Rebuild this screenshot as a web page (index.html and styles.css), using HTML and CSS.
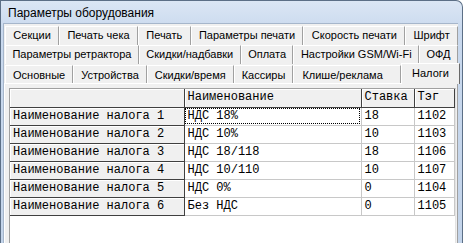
FILE: index.html
```html
<!DOCTYPE html>
<html>
<head>
<meta charset="utf-8">
<link rel="stylesheet" href="styles.css">
</head>
<body>
<div class="window">
  <div class="titlebar">Параметры оборудования</div>
  <div class="client">
    <div class="tabs">
      <div class="tabrow">
        <div class="tab">Секции</div>
        <div class="tab">Печать чека</div>
        <div class="tab">Печать</div>
        <div class="tab">Параметры печати</div>
        <div class="tab">Скорость печати</div>
        <div class="tab">Шрифт</div>
      </div>
      <div class="tabrow">
        <div class="tab">Параметры ретрактора</div>
        <div class="tab">Скидки/надбавки</div>
        <div class="tab">Оплата</div>
        <div class="tab">Настройки GSM/Wi-Fi</div>
        <div class="tab">ОФД</div>
      </div>
      <div class="tabrow last">
        <div class="tab">Основные</div>
        <div class="tab">Устройства</div>
        <div class="tab">Скидки/время</div>
        <div class="tab">Кассиры</div>
        <div class="tab grow">Клише/реклама</div>
        <div class="tab active">Налоги</div>
      </div>
    </div>
    <div class="panel">
      <div class="gridbox">
        <table class="grid">
          <colgroup>
            <col class="c0"><col class="c1"><col class="c2"><col class="c3">
          </colgroup>
          <tr class="head">
            <th class="fix"></th><th>Наименование</th><th>Ставка</th><th>Тэг</th>
          </tr>
          <tr><th class="fix">Наименование налога 1</th><td class="focus">НДС 18%</td><td>18</td><td>1102</td></tr>
          <tr><th class="fix">Наименование налога 2</th><td>НДС 10%</td><td>10</td><td>1103</td></tr>
          <tr><th class="fix">Наименование налога 3</th><td>НДС 18/118</td><td>18</td><td>1106</td></tr>
          <tr><th class="fix">Наименование налога 4</th><td>НДС 10/110</td><td>10</td><td>1107</td></tr>
          <tr><th class="fix">Наименование налога 5</th><td>НДС 0%</td><td>0</td><td>1104</td></tr>
          <tr><th class="fix">Наименование налога 6</th><td>Без НДС</td><td>0</td><td>1105</td></tr>
        </table>
      </div>
    </div>
  </div>
</div>
</body>
</html>
```

FILE: styles.css
```css
html, body {
  margin: 0;
  padding: 0;
  background: #ffffff;
  width: 468px;
  height: 243px;
  overflow: hidden;
}

.window {
  box-sizing: border-box;
  width: 463px;
  height: 243px;
  border: 1px solid #5c6f86;
  border-bottom: none;
  border-radius: 0 7px 0 0;
  background: linear-gradient(#dbe6f4, #c9d9ee 30px, #c3d4ea);
  padding: 0 4px 0 2px;
  display: flex;
  flex-direction: column;
  overflow: hidden;
}

.titlebar {
  height: 22px;
  flex: none;
  font-family: "Liberation Sans", Arial, sans-serif;
  font-size: 12px;
  line-height: 24px;
  color: #000;
  padding-left: 5px;
}

.client {
  flex: 1;
  min-height: 0;
  background: #f0f0f0;
  border-top: 1px solid #a6b6cb;
  border-left: 1px solid #a6b6cb;
  display: flex;
  flex-direction: column;
}

.tabs {
  display: flex;
  flex-direction: column;
  padding: 2px 0 0 1px;
  font-family: "Liberation Sans", Arial, sans-serif;
  font-size: 11px;
  color: #000;
}

.tabrow {
  display: flex;
  height: 19px;
}

.tab {
  flex: 1 1 auto;
  box-sizing: border-box;
  text-align: center;
  line-height: 17px;
  padding: 0 4px;
  border-left: 1px solid #ffffff;
  border-top: 1px solid #ffffff;
  border-right: 1px solid #a0a0a0;
  white-space: nowrap;
}

.tabrow.last {
  height: 19px;
  align-items: flex-end;
}

.tabrow.last .tab {
  flex: none;
  padding: 0 7px;
  height: 18px;
  line-height: 18px;
}

.tabrow.last .tab.grow {
  flex: 1 1 auto;
  min-width: 0;
  text-align: left;
  padding-left: 8px;
}

.tabrow.last .tab.active {
  flex: 0 0 59px;
  padding: 0;
  height: 21px;
  margin-right: -2px;
  line-height: 18px;
  text-align: center;
  background: #f0f0f0;
  border-right: 1px solid #696969;
  position: relative;
  z-index: 1;
  margin-bottom: -1px;
}

.panel {
  flex: 1;
  border-top: 1px solid #ffffff;
  border-left: 1px solid #ffffff;
  border-right: 1px solid #a0a0a0;
  padding: 4px 1px 0 4px;
}

.gridbox {
  height: 200px;
  background: #ffffff;
  border-top: 1px solid #a0a0a0;
  border-left: 1px solid #a0a0a0;
  border-right: 1px solid #e3e3e3;
}

.grid {
  border-collapse: collapse;
  table-layout: fixed;
  font-family: "Liberation Mono", "Courier New", monospace;
  font-size: 12px;
  color: #000;
}

.c0 { width: 174px; }
.c1 { width: 177px; }
.c2 { width: 53px; }
.c3 { width: 40px; }

.grid th, .grid td {
  height: 18px;
  padding: 0 0 0 3px;
  text-align: left;
  font-weight: normal;
  white-space: nowrap;
  overflow: hidden;
  line-height: 17px;
  box-sizing: border-box;
}

.grid td {
  border-right: 1px solid #c8c8c8;
  border-bottom: 1px solid #c8c8c8;
}

.grid th {
  background: #f0f0f0;
  border-right: 1px solid #404040;
  border-bottom: 1px solid #404040;
  box-shadow: inset 1px 1px 0 #ffffff;
}

.grid td.focus {
  outline: 1px dotted #000;
  outline-offset: -2px;
}
```
